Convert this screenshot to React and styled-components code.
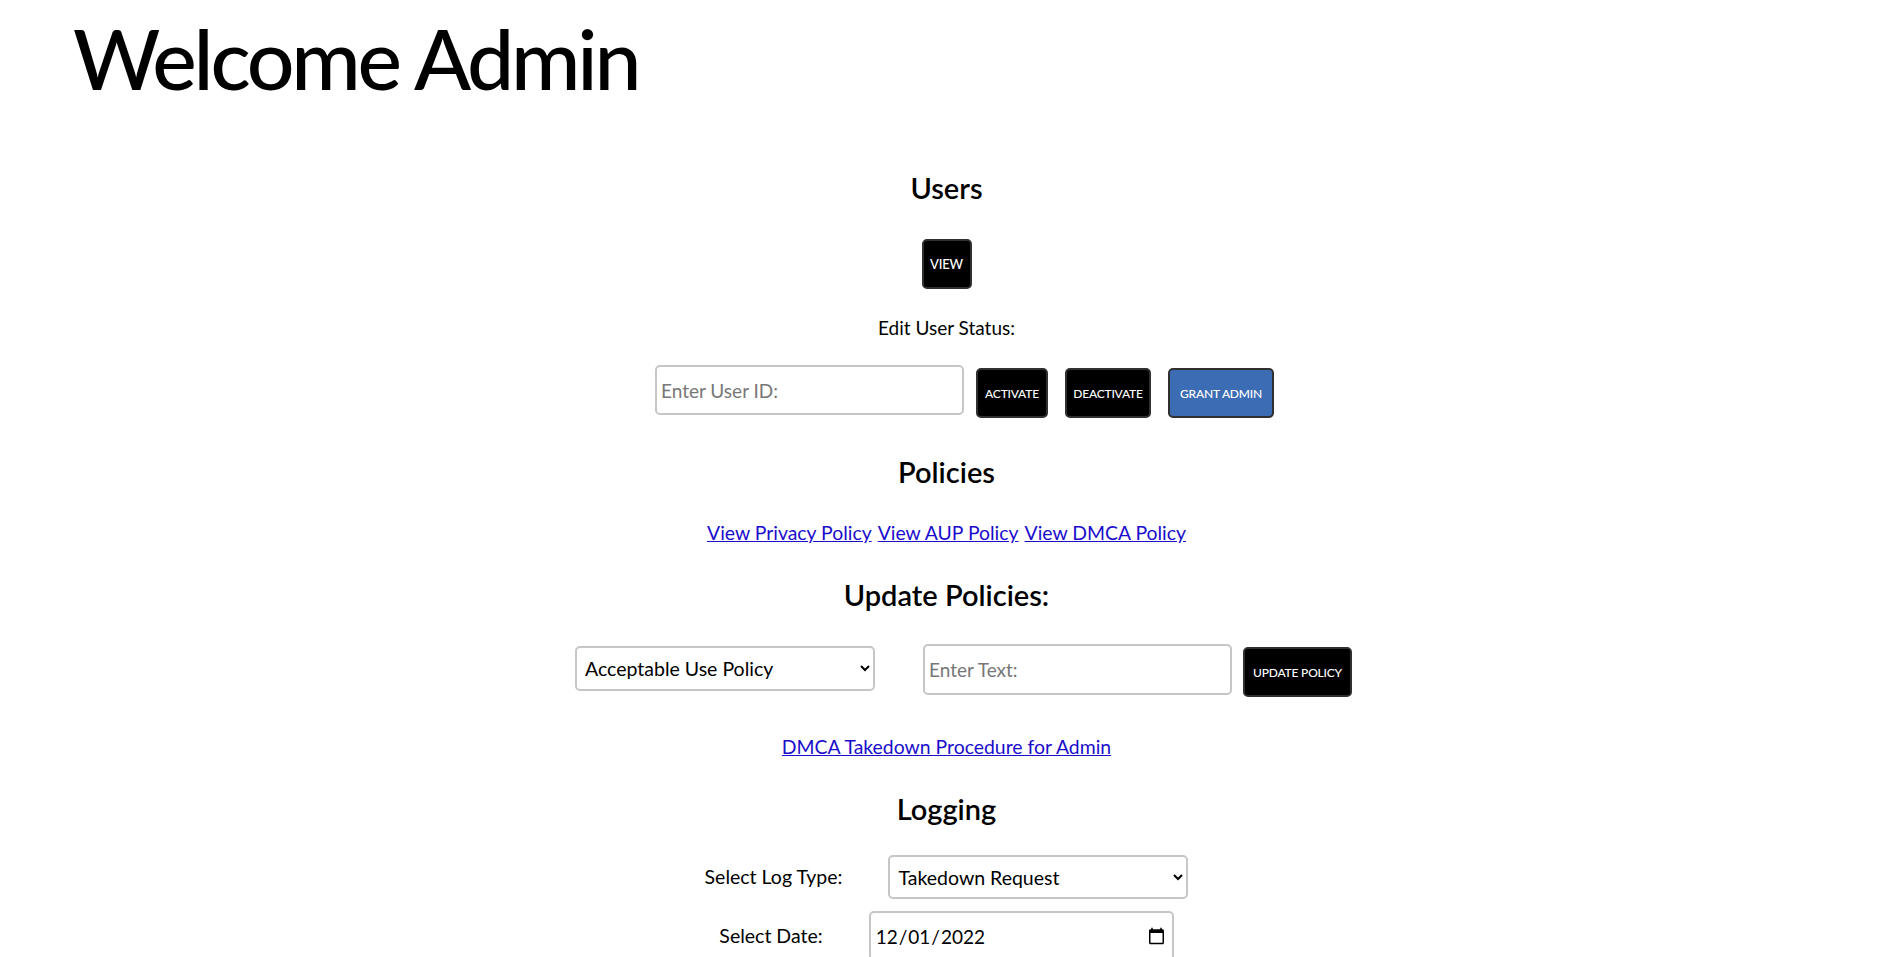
import React from "react";
import styled, { createGlobalStyle } from "styled-components";

const Global = createGlobalStyle`
  html, body { margin: 0; padding: 0; background: #fff; }
  body { font-family: "Lato", "Noto Sans", sans-serif; color: #000; }
  * { box-sizing: border-box; }
`;

const Page = styled.div`
  width: 100%;
  min-height: 957px;
`;

const Title = styled.h1`
  margin: 0;
  padding: 8px 0 0 73px;
  font-size: 84px;
  line-height: 100px;
  font-weight: 500;
  letter-spacing: -3.2px;
`;

const Main = styled.main`
  display: flex;
  flex-direction: column;
  align-items: center;
  text-align: center;
  padding: 60px 4px 0 0;
`;

const Heading = styled.h2`
  margin: ${(p) => p.$mt || 0}px 0 0;
  font-size: 29px;
  line-height: 40px;
  font-weight: 600;
`;

const Text = styled.p`
  margin: ${(p) => p.$mt || 0}px 0 0;
  font-size: 19px;
  line-height: 24px;
`;

const Row = styled.div`
  display: flex;
  align-items: flex-start;
  margin-top: ${(p) => p.$mt || 0}px;
  padding-left: ${(p) => p.$shift || 0}px;
`;

const Button = styled.button`
  flex: none;
  width: ${(p) => p.$w || 50}px;
  height: 50px;
  margin: ${(p) => p.$mt || 0}px 0 0 ${(p) => p.$ml || 0}px;
  padding: 0;
  background: ${(p) => (p.$blue ? "#3c6cb4" : "#000")};
  color: #fff;
  border: 2px solid #303030;
  border-radius: 5px;
  font-family: inherit;
  font-size: ${(p) => p.$fs || 12}px;
  font-weight: 500;
  letter-spacing: -0.2px;
  text-transform: uppercase;
  white-space: nowrap;
  cursor: pointer;
`;

const TextInput = styled.input`
  width: ${(p) => p.$w}px;
  height: ${(p) => p.$h || 50}px;
  margin: ${(p) => p.$mt || 0}px 0 0 ${(p) => p.$ml || 0}px;
  padding: 0 4px;
  border: 2px solid #c6c6c6;
  border-radius: 5px;
  font-family: inherit;
  font-size: 19px;
  color: #000;
  &::placeholder { color: #777; }
`;

const Select = styled.select`
  width: ${(p) => p.$w}px;
  height: ${(p) => p.$h || 45}px;
  margin: ${(p) => p.$mt || 0}px 0 0 ${(p) => p.$ml || 0}px;
  padding: 0 4px;
  border: 2px solid #c6c6c6;
  border-radius: 5px;
  background: #fff;
  font-family: inherit;
  font-size: 19.5px;
  color: #000;
`;

const Link = styled.a`
  color: #1a0dcc;
  text-decoration: underline;
  font-size: 19.4px;
  line-height: 24px;
`;

const LinkLine = styled.div`
  margin-top: ${(p) => p.$mt || 0}px;
  display: flex;
  gap: 6px;
`;

const Label = styled.label`
  font-size: 19.5px;
  line-height: 24px;
`;

const FieldRow = styled.div`
  display: flex;
  align-items: center;
  gap: 46px;
  margin-top: ${(p) => p.$mt || 0}px;
`;

export default function App() {
  return (
    <Page>
      <Global />
      <Title>Welcome Admin</Title>
      <Main>
        <Heading>Users</Heading>
        <Button $mt={31} $fs={13}>View</Button>
        <Text $mt={27}>Edit User Status:</Text>
        <Row $mt={25} $shift={36}>
          <TextInput $w={309} placeholder="Enter User ID:" />
          <Button $mt={3} $ml={12} $w={72}>Activate</Button>
          <Button $mt={3} $ml={17} $w={86}>Deactivate</Button>
          <Button $mt={3} $ml={17} $w={106} $blue>Grant Admin</Button>
        </Row>
        <Heading $mt={34}>Policies</Heading>
        <LinkLine $mt={29}>
          <Link href="#">View Privacy Policy</Link>
          <Link href="#">View AUP Policy</Link>
          <Link href="#">View DMCA Policy</Link>
        </LinkLine>
        <Heading $mt={30}>Update Policies:</Heading>
        <Row $mt={29} $shift={34}>
          <Select $w={300} $mt={2} defaultValue="aup">
            <option value="privacy">Privacy Policy</option>
            <option value="aup">Acceptable Use Policy</option>
            <option value="dmca">DMCA Policy</option>
          </Select>
          <TextInput $w={309} $h={51} $ml={48} placeholder="Enter Text:" />
          <Button $mt={3} $ml={11} $w={109}>Update Policy</Button>
        </Row>
        <LinkLine $mt={38}>
          <Link href="#">DMCA Takedown Procedure for Admin</Link>
        </LinkLine>
        <Heading $mt={30}>Logging</Heading>
        <FieldRow $mt={26}>
          <Label>Select Log Type:</Label>
          <Select $w={300} $h={44} defaultValue="takedown">
            <option value="takedown">Takedown Request</option>
            <option value="login">Login</option>
          </Select>
        </FieldRow>
        <FieldRow $mt={12}>
          <Label>Select Date:</Label>
          <TextInput type="date" $w={305} $h={50} defaultValue="2022-12-01" />
        </FieldRow>
      </Main>
    </Page>
  );
}
